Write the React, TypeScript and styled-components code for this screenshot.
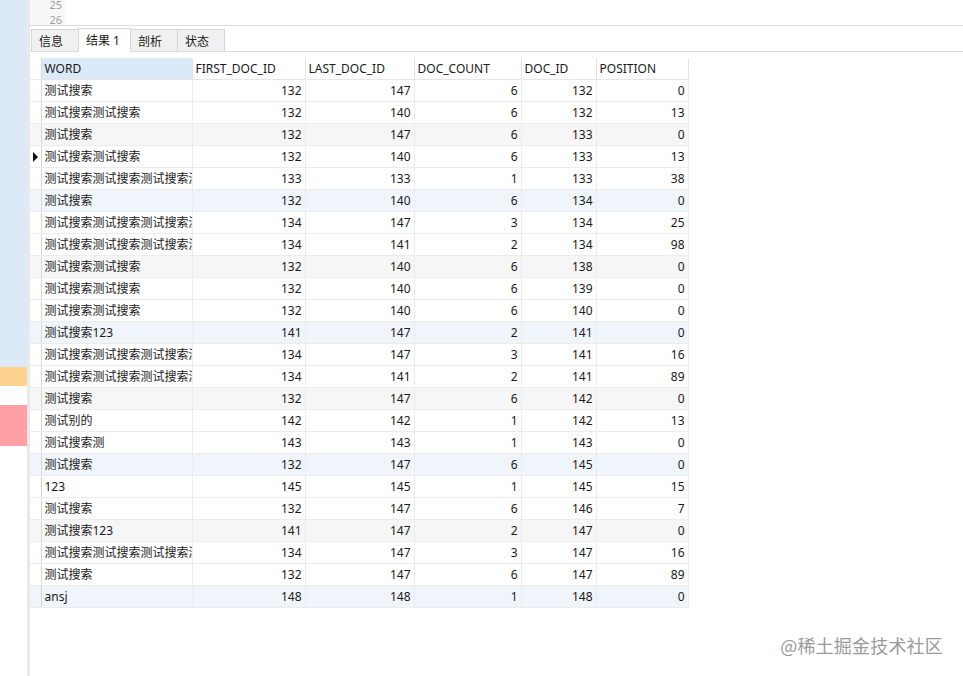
import { createGlobalStyle, styled } from 'styled-components';

const GlobalStyle = createGlobalStyle`
  html, body {
    margin: 0;
    padding: 0;
    background: #ffffff;
  }
  body {
    font-family: 'Noto Sans', 'Noto Sans CJK SC', sans-serif;
    color: #1a1a1a;
  }
`;

type Row = [string, number, number, number, number, number];

const LONG = '测试搜索测试搜索测试搜索测';

const rows: Row[] = [
  ['测试搜索', 132, 147, 6, 132, 0],
  ['测试搜索测试搜索', 132, 140, 6, 132, 13],
  ['测试搜索', 132, 147, 6, 133, 0],
  ['测试搜索测试搜索', 132, 140, 6, 133, 13],
  [LONG, 133, 133, 1, 133, 38],
  ['测试搜索', 132, 140, 6, 134, 0],
  [LONG, 134, 147, 3, 134, 25],
  [LONG, 134, 141, 2, 134, 98],
  ['测试搜索测试搜索', 132, 140, 6, 138, 0],
  ['测试搜索测试搜索', 132, 140, 6, 139, 0],
  ['测试搜索测试搜索', 132, 140, 6, 140, 0],
  ['测试搜索123', 141, 147, 2, 141, 0],
  [LONG, 134, 147, 3, 141, 16],
  [LONG, 134, 141, 2, 141, 89],
  ['测试搜索', 132, 147, 6, 142, 0],
  ['测试别的', 142, 142, 1, 142, 13],
  ['测试搜索测', 143, 143, 1, 143, 0],
  ['测试搜索', 132, 147, 6, 145, 0],
  ['123', 145, 145, 1, 145, 15],
  ['测试搜索', 132, 147, 6, 146, 7],
  ['测试搜索123', 141, 147, 2, 147, 0],
  [LONG, 134, 147, 3, 147, 16],
  ['测试搜索', 132, 147, 6, 147, 89],
  ['ansj', 148, 148, 1, 148, 0],
];

const columns = [
  { name: 'WORD', width: 151 },
  { name: 'FIRST_DOC_ID', width: 113 },
  { name: 'LAST_DOC_ID', width: 109 },
  { name: 'DOC_COUNT', width: 107 },
  { name: 'DOC_ID', width: 75 },
  { name: 'POSITION', width: 92 },
];

const INDICATOR_W = 11;
const tableWidth = INDICATOR_W + columns.reduce((s, c) => s + c.width, 0);

const tabs = ['信息', '结果 1', '剖析', '状态'];

const Page = styled.div`
  position: relative;
  display: flex;
  width: 963px;
  height: 676px;
  overflow: hidden;
  background: #ffffff;
`;

const Strip = styled.div`
  width: 27px;
  display: flex;
  flex-direction: column;
  flex-shrink: 0;
`;

const Mark = styled.div<{ $color: string; $h?: number }>`
  background: ${(p) => p.$color};
  height: ${(p) => (p.$h ? `${p.$h}px` : 'auto')};
  flex: ${(p) => (p.$h ? '0 0 auto' : '1')};
`;

const Divider = styled.div`
  width: 3px;
  flex-shrink: 0;
  background: #e9e9e9;
`;

const Main = styled.div`
  flex: 1;
  display: flex;
  flex-direction: column;
  min-width: 0;
`;

const Editor = styled.div`
  height: 25px;
  display: flex;
  border-bottom: 1px solid #dcdcdc;
  overflow: hidden;
`;

const Gutter = styled.div`
  width: 35px;
  background: #f8f8f8;
  display: flex;
  flex-direction: column;
  align-items: flex-end;
  padding-right: 3px;
  box-sizing: border-box;
`;

const LineNo = styled.div`
  font-size: 11px;
  line-height: 15px;
  color: #a0a0a0;
  &:first-child {
    margin-top: -3px;
  }
`;

const TabBar = styled.div`
  display: flex;
  align-items: flex-end;
  height: 26px;
  padding-left: 1px;
  border-bottom: 1px solid #dadada;
  box-sizing: border-box;
`;

const Tab = styled.div<{ $active?: boolean }>`
  height: ${(p) => (p.$active ? '24px' : '22px')};
  min-width: 48px;
  box-sizing: border-box;
  padding: 0 10px 0 7px;
  display: flex;
  align-items: center;
  font-size: 12px;
  color: #1a1a1a;
  background: ${(p) => (p.$active ? '#ffffff' : '#f0f0f0')};
  border: 1px solid #d6d6d6;
  border-bottom: ${(p) => (p.$active ? '1px solid #ffffff' : 'none')};
  margin-bottom: ${(p) => (p.$active ? '-1px' : '0')};
  & + & {
    margin-left: -1px;
  }
`;

const GridWrap = styled.div`
  padding-top: 6px;
`;

const Table = styled.table<{ $width: number }>`
  width: ${(p) => p.$width}px;
  border-collapse: collapse;
  table-layout: fixed;
  font-size: 12px;
  line-height: 21px;
`;

const Indicator = styled.td`
  padding: 0;
  border-right: 1px solid #d8d8d8;
  border-bottom: 1px solid #ececec;
  position: relative;
`;

const HeadCell = styled.th<{ $selected?: boolean }>`
  height: 21px;
  padding: 0 0 0 3px;
  text-align: left;
  font-weight: normal;
  white-space: nowrap;
  overflow: hidden;
  background: ${(p) => (p.$selected ? '#dce9f8' : '#ffffff')};
  border-right: 1px solid #e2e2e2;
  border-bottom: 1px solid #e6e6e6;
`;

const BodyRow = styled.tr<{ $tint: string }>`
  background: ${(p) => p.$tint};
`;

const Cell = styled.td<{ $num?: boolean }>`
  height: 21px;
  padding: ${(p) => (p.$num ? '0 3px 0 0' : '0 0 0 3px')};
  text-align: ${(p) => (p.$num ? 'right' : 'left')};
  white-space: nowrap;
  overflow: hidden;
  text-overflow: clip;
  border-right: 1px solid #ececec;
  border-bottom: 1px solid #ececec;
`;

const Pointer = styled.span`
  position: absolute;
  left: 3px;
  top: 6px;
  width: 0;
  height: 0;
  border-top: 5px solid transparent;
  border-bottom: 5px solid transparent;
  border-left: 5px solid #111111;
`;

const Watermark = styled.div`
  position: absolute;
  right: 20px;
  top: 632px;
  font-size: 18px;
  line-height: 26px;
  color: #9a9a9a;
  font-family: 'Noto Sans CJK SC', sans-serif;
  letter-spacing: 0.2px;
`;

const tintFor = (i: number) => {
  const n = i + 1;
  if (n % 6 === 3) return '#f6f6f6';
  if (n % 6 === 0) return '#f0f5fc';
  return '#ffffff';
};

export default function App() {
  return (
    <Page>
      <GlobalStyle />
      <Strip>
        <Mark $color="#dce9f9" $h={367} />
        <Mark $color="#fdd38f" $h={19} />
        <Mark $color="#ffffff" $h={19} />
        <Mark $color="#fe9fa3" $h={41} />
        <Mark $color="#ffffff" />
      </Strip>
      <Divider />
      <Main>
        <Editor>
          <Gutter>
            <LineNo>25</LineNo>
            <LineNo>26</LineNo>
          </Gutter>
        </Editor>
        <TabBar>
          {tabs.map((t, i) => (
            <Tab key={t} $active={i === 1}>
              {t}
            </Tab>
          ))}
        </TabBar>
        <GridWrap>
          <Table $width={tableWidth}>
            <colgroup>
              <col style={{ width: INDICATOR_W }} />
              {columns.map((c) => (
                <col key={c.name} style={{ width: c.width }} />
              ))}
            </colgroup>
            <thead>
              <tr>
                <Indicator />
                {columns.map((c, i) => (
                  <HeadCell key={c.name} $selected={i === 0}>
                    {c.name}
                  </HeadCell>
                ))}
              </tr>
            </thead>
            <tbody>
              {rows.map((r, i) => (
                <BodyRow key={i} $tint={tintFor(i)}>
                  <Indicator>{i === 3 && <Pointer />}</Indicator>
                  <Cell>{r[0]}</Cell>
                  {r.slice(1).map((v, j) => (
                    <Cell key={j} $num>
                      {v}
                    </Cell>
                  ))}
                </BodyRow>
              ))}
            </tbody>
          </Table>
        </GridWrap>
      </Main>
      <Watermark>@稀土掘金技术社区</Watermark>
    </Page>
  );
}
